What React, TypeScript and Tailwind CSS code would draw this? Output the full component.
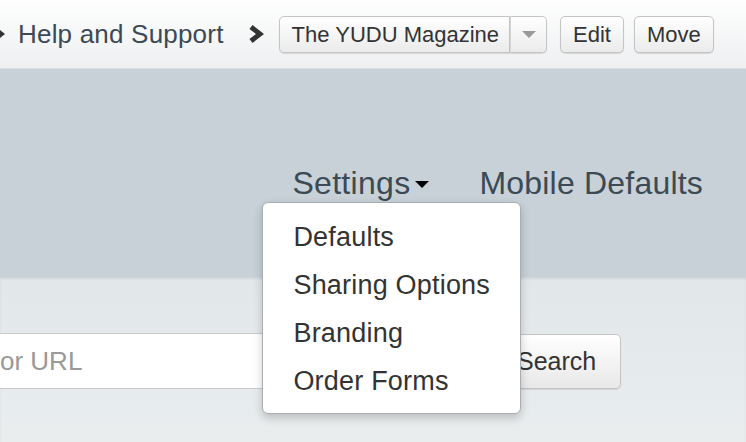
import React from 'react';

const Chevron = ({ className }: { className?: string }) => (
  <svg viewBox="0 0 16 20" className={className}>
    <polyline points="3,3 12,10 3,17" fill="none" stroke="currentColor" strokeWidth="5" strokeLinejoin="miter" />
  </svg>
);

const Caret = ({ className }: { className?: string }) => (
  <svg viewBox="0 0 14 7" className={className}>
    <polygon points="0,0 14,0 7,7" fill="currentColor" />
  </svg>
);

const btn =
  'h-[37px] border border-[#c4c4c4] bg-gradient-to-b from-white to-[#ebebeb] shadow-[0_1px_1px_rgba(0,0,0,0.12)] text-[22px] text-[#333] flex items-center';

export default function App() {
  const menuItems = ['Defaults', 'Sharing Options', 'Branding', 'Order Forms'];

  return (
    <div className="w-[746px] h-[442px] overflow-hidden flex flex-col bg-[#e6eaec] font-['Liberation_Sans',Arial,sans-serif]">
      {/* Breadcrumb bar */}
      <div className="h-[69px] shrink-0 flex items-center border-b border-[#dadee0] bg-gradient-to-b from-[#fefefe] to-[#eef0f1]">
        <Chevron className="w-[16px] h-[20px] -ml-[11px] text-[#333]" />
        <span className="ml-[13px] text-[26px] text-[#3b4a54] tracking-[0.2px]">Help and Support</span>
        <Chevron className="ml-[24px] w-[16px] h-[20px] text-[#333]" />
        <div className="ml-[15px] flex">
          <button className={`${btn} rounded-l-[5px] pl-[12px] pr-[10px]`}>The YUDU Magazine</button>
          <button className={`${btn} rounded-r-[5px] border-l-[#d6d6d6] w-[37px] justify-center`}>
            <Caret className="w-[14px] h-[7px] text-[#9a9a9a]" />
          </button>
        </div>
        <button className={`${btn} rounded-[5px] ml-[13px] px-[12px]`}>Edit</button>
        <button className={`${btn} rounded-[5px] ml-[10px] px-[12px]`}>Move</button>
      </div>

      {/* Tabs region */}
      <div className="h-[208px] shrink-0 bg-[#c7d1d7] flex justify-end items-start pt-[94px] pr-[43px]">
        <div className="relative flex items-center text-[32px] leading-[40px] text-[#3b4a54] tracking-[0.3px]">
          <span>Settings</span>
          <Caret className="ml-[5px] mt-[2px] w-[14px] h-[7px] text-black" />
          <div className="absolute left-[-30px] top-[39px] w-[259px] rounded-[6px] border border-[#a9aeb1] bg-white pt-[10px] pb-[8px] shadow-[0_4px_10px_rgba(0,0,0,0.2)] z-10 tracking-[0.2px]">
            {menuItems.map(item => (
              <div key={item} className="h-[48px] flex items-center pl-[30px] text-[27px] text-[#333]">
                {item}
              </div>
            ))}
          </div>
        </div>
        <span className="ml-[50px] text-[32px] leading-[40px] text-[#3b4a54] tracking-[0.2px]">Mobile Defaults</span>
      </div>

      {/* Search region */}
      <div className="flex-1 bg-gradient-to-b from-[#e2e7ea] to-[#e9edee] shadow-[inset_0_2px_2px_rgba(0,0,0,0.08)] pt-[56px]">
        <div className="flex">
          <input
            placeholder="or URL"
            className="w-[505px] h-[56px] bg-white border-y border-[#c8cbcd] text-[26px] placeholder:text-[#999] outline-none"
          />
          <button className="h-[55px] mt-[1px] w-[116px] border border-[#c4c4c4] rounded-r-[5px] bg-gradient-to-b from-white to-[#e8e8e8] text-[25px] text-[#333] pl-[11px] text-left shadow-[0_1px_1px_rgba(0,0,0,0.1)]">
            Search
          </button>
        </div>
      </div>
    </div>
  );
}
